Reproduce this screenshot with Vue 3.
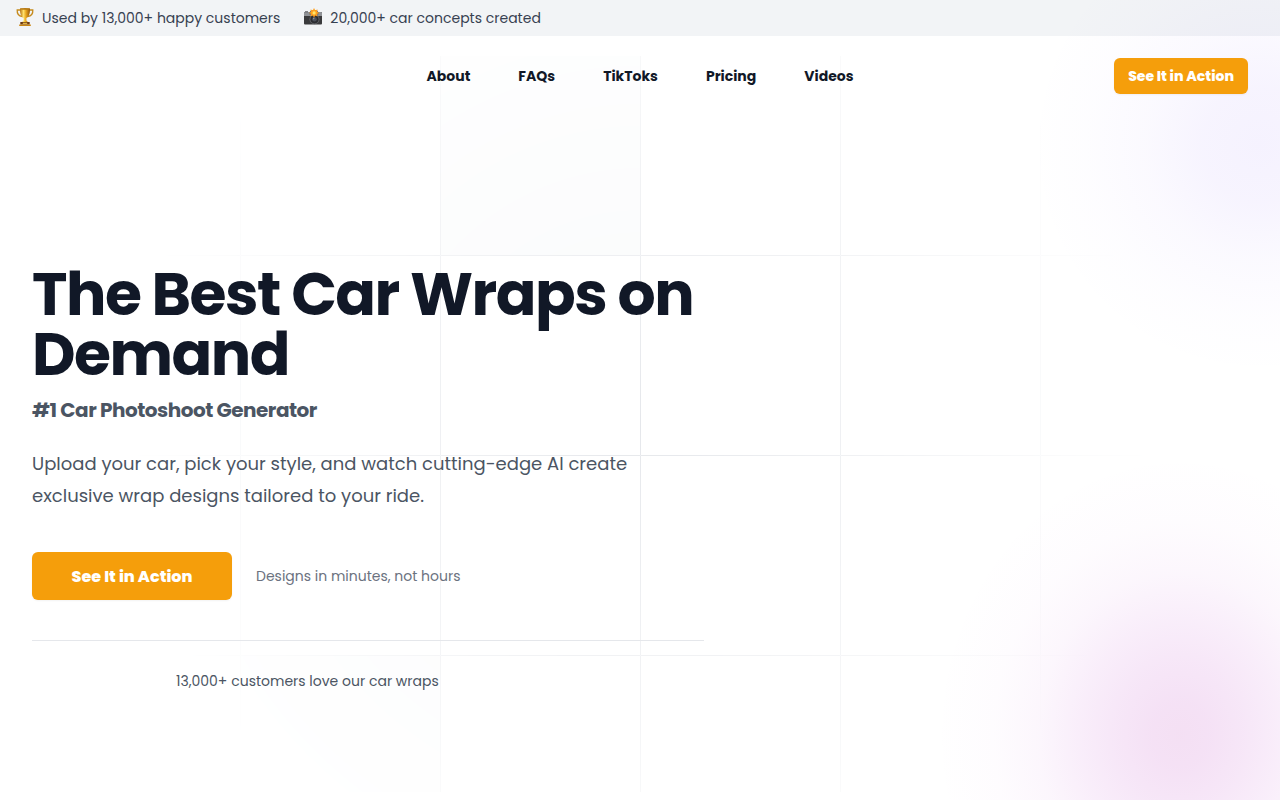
<script setup>
const links = ['About', 'FAQs', 'TikToks', 'Pricing', 'Videos']
</script>

<template>
  <div class="page">
    <div class="backdrop" aria-hidden="true">
      <svg class="grid">
        <defs>
          <pattern id="grid-pattern" width="200" height="200" x="50%" y="-1" patternUnits="userSpaceOnUse">
            <path d="M.5 200V.5H200" fill="none" />
          </pattern>
        </defs>
        <svg x="50%" y="-1" class="tiles">
          <path d="M-200 0h201v201h-201Z M600 0h201v201h-201Z M-400 600h201v201h-201Z M200 800h201v201h-201Z" stroke-width="0" />
        </svg>
        <rect width="100%" height="100%" stroke-width="0" fill="url(#grid-pattern)" />
      </svg>
    </div>

    <div class="topbar">
      <div class="fact">
        <svg class="emoji" viewBox="0 0 18 20" aria-hidden="true">
          <defs>
            <linearGradient id="gold" x1="0" x2="1" y1="0" y2="0">
              <stop offset="0" stop-color="#b5700c" />
              <stop offset=".35" stop-color="#ffe06a" />
              <stop offset=".6" stop-color="#e9a51c" />
              <stop offset="1" stop-color="#925406" />
            </linearGradient>
          </defs>
          <path d="M4.500 2H1.200c-.3 3.600 1.500 6 5.200 6.500M13.500 2h3.300c.3 3.600-1.500 6-5.200 6.500" fill="none" stroke="#c58a1b" stroke-width="1.300" />
          <path d="M4 .5h10c0 5-.8 8-3.600 9.600v2.400l1.400 1.500H6.200l1.400-1.500v-2.400C4.800 8.500 4 5.500 4 .5Z" fill="url(#gold)" />
          <ellipse cx="9" cy=".9" rx="5" ry=".8" fill="#b77b18" />
          <path d="M4.300 14h9.400v2.600H4.300Z" fill="#6d3a12" />
          <path d="M6.800 14.700h4.400v1.200H6.800Z" fill="#efc14a" />
          <path d="M3.200 16.500h11.600V18H3.200Z" fill="#c98614" />
        </svg>
        <span>Used by 13,000+ happy customers</span>
      </div>
      <div class="fact">
        <svg class="emoji" viewBox="0 0 18 20" aria-hidden="true">
          <rect x="0" y="4" width="18" height="12.500" rx="1" fill="#3a3a3c" />
          <path d="M0 8V5q0-1 1-1h16q1 0 1 1v3Z" fill="#909296" />
          <path d="M5.500 4.500 7 2.300h6l1.500 2.200v2h-9Z" fill="#606267" />
          <rect x="1" y="3.200" width="3" height="1.200" fill="#66686b" />
          <circle cx="10.500" cy="11.300" r="5" fill="#66686c" />
          <circle cx="10.500" cy="11.300" r="4.100" fill="#2c2d31" />
          <circle cx="10.500" cy="11.300" r="2.300" fill="#4b505a" />
          <circle cx="9.700" cy="10.600" r=".8" fill="#8792a2" />
          <path d="m10 0 1.200 2.200 2.400-.8-.6 2.400 2.200 1.100-2.200 1.200.5 2.300-2.300-.8L10 9.700 8.900 7.600l-2.500.7.800-2.300L5 4.900l2.200-1.100-.7-2.300 2.400.7Z" fill="#ffa01e" />
          <circle cx="10.100" cy="4.900" r="1.600" fill="#ffe66a" />
        </svg>
        <span>20,000+ car concepts created</span>
      </div>
    </div>

    <header class="header">
      <nav class="nav" aria-label="Main">
        <a v-for="link in links" :key="link" href="#">{{ link }}</a>
      </nav>
      <a href="#" class="cta cta-small">See It in Action</a>
    </header>

    <main class="hero">
      <div class="copy">
        <h1>The Best Car Wraps on Demand</h1>
        <h2>#1 Car Photoshoot Generator</h2>
        <p class="lead">Upload your car, pick your style, and watch cutting-edge AI create exclusive wrap designs tailored to your ride.</p>
        <div class="actions">
          <a href="#" class="cta cta-large">See It in Action</a>
          <span class="note">Designs in minutes, not hours</span>
        </div>
        <p class="proof">13,000+ customers love our car wraps</p>
      </div>
    </main>
  </div>
</template>

<style>
body {
  margin: 0;
  background: #fff;
}
</style>

<style scoped>
.page {
  position: relative;
  isolation: isolate;
  min-height: 100vh;
  box-sizing: border-box;
  overflow: hidden;
  font-family: Poppins, Inter, sans-serif;
  color: #111827;
}

.backdrop {
  position: absolute;
  inset: 0;
  z-index: -1;
  background:
    radial-gradient(circle 230px at calc(100% - 20px) 145px, rgba(124, 80, 246, 0.075), rgba(124, 80, 246, 0.062) 25%, rgba(124, 80, 246, 0.03) 50%, rgba(124, 80, 246, 0.01) 75%, transparent),
    radial-gradient(ellipse 245px 280px at calc(100% - 100px) 735px, rgba(180, 38, 176, 0.145), rgba(180, 38, 184, 0.138) 12%, rgba(180, 40, 190, 0.115) 26%, rgba(184, 50, 200, 0.082) 42%, rgba(188, 60, 205, 0.044) 58%, rgba(192, 60, 210, 0.016) 76%, transparent);
}

.grid {
  position: absolute;
  top: 56px;
  left: 0;
  width: 100%;
  height: calc(100% - 64px);
  stroke: #e5e7eb;
  mask-image: radial-gradient(512px 512px at center, #fff, transparent);
}

.tiles {
  overflow: visible;
  fill: #f9fafb;
}

.topbar {
  display: flex;
  align-items: center;
  gap: 24px;
  height: 36px;
  padding: 0 16px;
  background: rgba(0, 30, 70, 0.05);
  color: #374151;
  font-size: 14px;
  line-height: 20px;
}

.fact {
  display: flex;
  align-items: center;
  gap: 8px;
}

.emoji {
  width: 18px;
  height: 20px;
}

.header {
  display: grid;
  grid-template-columns: 1fr auto 1fr;
  align-items: center;
  padding: 22px 32px;
}

.nav {
  grid-column: 2;
  display: flex;
  gap: 48px;
}

.nav a {
  color: #111827;
  font-size: 14px;
  font-weight: 700;
  line-height: 24px;
  text-decoration: none;
}

.cta {
  display: flex;
  align-items: center;
  justify-content: center;
  box-sizing: border-box;
  border-radius: 6px;
  background: #f59e0b;
  box-shadow: 0 1px 2px rgba(0, 0, 0, 0.05);
  color: #fff;
  font-weight: 800;
  text-decoration: none;
}

.cta-small {
  justify-self: end;
  height: 36px;
  padding: 0 14px;
  font-size: 14px;
}

.cta-large {
  width: 200px;
  height: 48px;
  font-size: 16px;
}

.hero {
  padding: 148px 32px 96px;
}

.copy {
  max-width: 672px;
}

h1 {
  margin: 0;
  font-size: 60px;
  font-weight: 700;
  letter-spacing: -0.025em;
  line-height: 60px;
}

h2 {
  margin: 12px 0 0;
  color: #4b5563;
  font-size: 20px;
  font-weight: 700;
  letter-spacing: -0.025em;
  line-height: 28px;
}

.lead {
  margin: 24px 0 0;
  color: #4b5563;
  font-size: 18px;
  line-height: 32px;
}

.actions {
  display: flex;
  align-items: center;
  gap: 24px;
  margin-top: 40px;
}

.note {
  color: #6b7280;
  font-size: 14px;
}

.proof {
  margin: 40px 0 0;
  padding: 30px 0 0 144px;
  border-top: 1px solid #e5e7eb;
  color: #4b5563;
  font-size: 14px;
  line-height: 20px;
}
</style>
